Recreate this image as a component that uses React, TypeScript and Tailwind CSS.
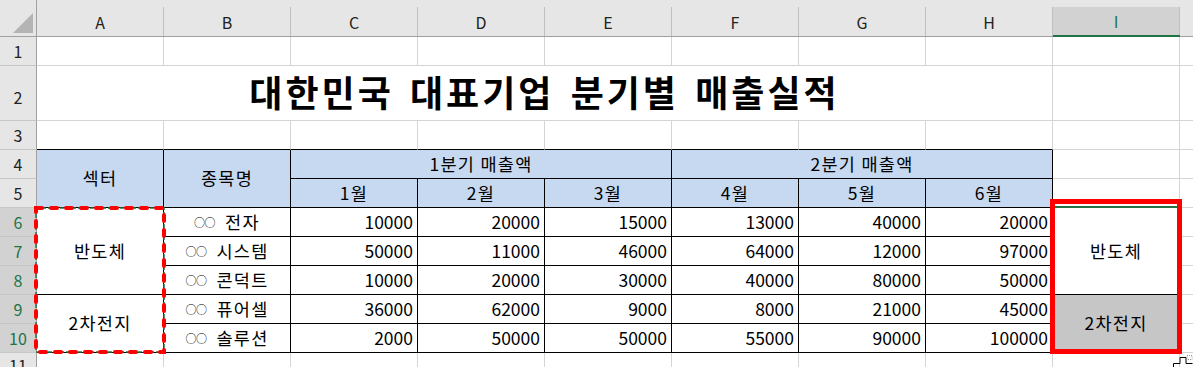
import React from "react";

const grid = "border-r border-b border-[#d4d4d4]";
const dark = "border-r border-b border-black";
const ko = "tracking-[1.3px]";

const groups = [
  {
    sector: "반도체",
    span: "row-span-3",
    side: "bg-white border-r border-b border-r-[#d4d4d4] border-b-black",
    items: [
      { name: "전자", values: [10000, 20000, 15000, 13000, 40000, 20000] },
      { name: "시스템", values: [50000, 11000, 46000, 64000, 12000, 97000] },
      { name: "콘덕트", values: [10000, 20000, 30000, 40000, 80000, 50000] },
    ],
  },
  {
    sector: "2차전지",
    span: "row-span-2",
    side: "bg-[#c6c6c6] border-r border-b border-[#d4d4d4]",
    items: [
      { name: "퓨어셀", values: [36000, 62000, 9000, 8000, 21000, 45000] },
      { name: "솔루션", values: [2000, 50000, 50000, 55000, 90000, 100000] },
    ],
  },
];

const columns = ["A", "B", "C", "D", "E", "F", "G", "H", "I"];
const months = ["1월", "2월", "3월", "4월", "5월", "6월"];

const RowHead = ({ n, active = false, tall = false }: { n: number; active?: boolean; tall?: boolean }) => (
  <div
    className={`border-r border-b border-r-[#a0a0a0] border-b-[#c6c6c6] flex justify-center text-[16px] ${
      tall ? "items-end pb-[11px]" : "items-center"
    } ${active ? "bg-[#d2d2d2] text-[#217346]" : "bg-[#e6e6e6] text-[#222]"}`}
  >
    {n}
  </div>
);

const Empty = ({ last = false }: { last?: boolean }) =>
  last ? <div className="border-b border-[#d4d4d4]" /> : <div className={grid} />;

const App = () => {
  let rowNo = 6;

  return (
    <div className="relative w-[1193px] h-[367px] overflow-hidden bg-white text-black font-['Noto_Sans_CJK_KR','Noto_Sans',sans-serif]">
      <div className="grid grid-cols-[37px_repeat(9,127px)_1fr] grid-rows-[37px_29px_55px_repeat(8,29px)_1fr] h-full text-[17.5px]">
        {/* column headers */}
        <div className="bg-[#e6e6e6] border-b border-r border-[#a0a0a0] relative">
          <svg className="absolute left-0 top-0" width="36" height="36">
            <polygon points="13,33 33,13 33,33" fill="#b4b4b4" />
          </svg>
        </div>
        {columns.map((c) =>
          c === "I" ? (
            <div key={c} className="bg-[#e6e6e6] border-b-2 border-[#217346] pt-[7px]">
              <div className="h-full bg-[#d2d2d2] border-r border-[#c0c0c0] flex items-center justify-center text-[16px] text-[#217346]">
                {c}
              </div>
            </div>
          ) : (
            <div key={c} className="bg-[#e6e6e6] border-b border-[#a0a0a0] pt-[7px]">
              <div className="h-full border-r border-[#c0c0c0] flex items-center justify-center text-[16px] text-[#222]">
                {c}
              </div>
            </div>
          )
        )}
        <div className="bg-[#e6e6e6] border-b border-[#a0a0a0]" />

        {/* row 1 */}
        <RowHead n={1} />
        {columns.map((c) => (
          <Empty key={c} />
        ))}
        <Empty last />

        {/* row 2 */}
        <RowHead n={2} tall />
        <div
          className={`col-span-8 ${grid} flex items-end justify-center pb-[11px] text-[36px] font-bold leading-none tracking-[3px] [word-spacing:5px]`}
        >
          대한민국 대표기업 분기별 매출실적
        </div>
        <Empty />
        <Empty last />

        {/* row 3 */}
        <RowHead n={3} />
        {columns.slice(0, 8).map((c) => (
          <div key={c} className="border-r border-b border-r-[#d4d4d4] border-b-black" />
        ))}
        <Empty />
        <Empty last />

        {/* row 4 */}
        <RowHead n={4} />
        <div className={`row-span-2 ${dark} ${ko} bg-[#c6d9f0] flex items-center justify-center`}>섹터</div>
        <div className={`row-span-2 ${dark} ${ko} bg-[#c6d9f0] flex items-center justify-center`}>종목명</div>
        <div className={`col-span-3 ${dark} ${ko} bg-[#c6d9f0] flex items-center justify-center`}>1분기 매출액</div>
        <div className={`col-span-3 ${dark} ${ko} bg-[#c6d9f0] flex items-center justify-center`}>2분기 매출액</div>
        <Empty />
        <Empty last />

        {/* row 5 */}
        <RowHead n={5} />
        {months.map((m) => (
          <div key={m} className={`${dark} ${ko} bg-[#c6d9f0] flex items-center justify-center`}>
            {m}
          </div>
        ))}
        <Empty />
        <Empty last />

        {/* rows 6 - 10 */}
        {groups.map((g) =>
          g.items.map((item, i) => {
            const n = rowNo++;
            return (
              <React.Fragment key={item.name}>
                <RowHead n={n} active />
                {i === 0 && (
                  <div className={`${g.span} ${dark} ${ko} flex items-center justify-center`}>{g.sector}</div>
                )}
                <div className={`${dark} ${ko} flex items-center justify-center`}>
                  <span className="text-[11px] tracking-[-0.5px] mr-[10px]">○○</span>
                  {item.name}
                </div>
                {item.values.map((v, vi) => (
                  <div key={vi} className={`${dark} flex items-center justify-end pr-[4px]`}>
                    {v}
                  </div>
                ))}
                {i === 0 && (
                  <div className={`${g.span} ${g.side} ${ko} flex items-center justify-center`}>{g.sector}</div>
                )}
                <Empty last />
              </React.Fragment>
            );
          })
        )}

        {/* row 11 */}
        <RowHead n={11} />
        {columns.map((c) => (
          <Empty key={c} />
        ))}
        <Empty last />
      </div>

      {/* copy marquee around A6:A10 */}
      <svg className="absolute left-[30px] top-[202px]" width="140" height="156">
        <rect x="6" y="6" width="128" height="144" fill="none" stroke="#217346" strokeWidth="1.5" strokeDasharray="4 2" />
        <rect
          x="6"
          y="6"
          width="128"
          height="144"
          fill="none"
          stroke="#ff0000"
          strokeWidth="4"
          strokeLinecap="round"
          strokeDasharray="6 9"
        />
      </svg>

      {/* selection indicator + red shape over I6:I10 */}
      <div className="absolute left-[1055px] top-[206px] w-[122px] h-[2px] bg-[#217346]" />
      <div className="absolute left-[1050px] top-[199px] w-[132px] h-[155px] border-[5px] border-[#ff0000]" />

      {/* mouse cursor */}
      <svg className="absolute left-[1170px] top-[354px]" width="23" height="13">
        <path d="M10 3.5 H16 V9.5 H22.5 M3.5 13 V9.5 H10 V3.5" fill="#fff" stroke="#000" strokeWidth="1" />
        <rect x="17" y="1.5" width="5" height="4" fill="none" stroke="#9a9a9a" strokeWidth="1" strokeDasharray="1 1" />
      </svg>
    </div>
  );
};

export default App;
